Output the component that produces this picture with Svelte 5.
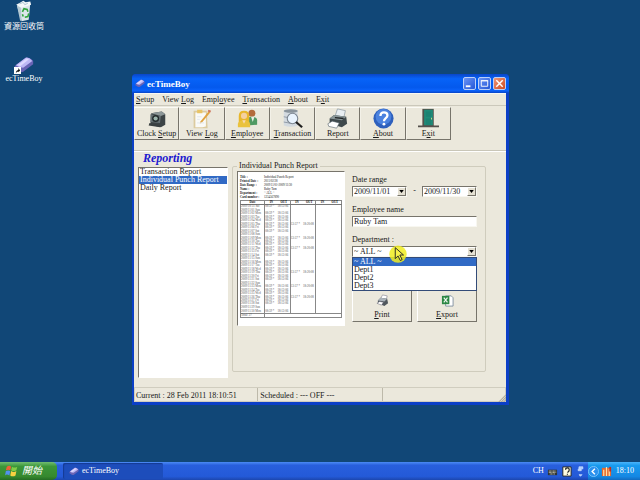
<script>
  const menus = [
    ['', 'S', 'etup'], ['View ', 'L', 'og'], ['Empl', 'o', 'yee'],
    ['', 'T', 'ransaction'], ['', 'A', 'bout'], ['E', 'x', 'it']
  ];
  const tools = [
    { id: 'clock', text: ['Clock ', 'S', 'etup'] },
    { id: 'log', text: ['View ', 'L', 'og'] },
    { id: 'people', text: ['', 'E', 'mployee'] },
    { id: 'search', text: ['', 'T', 'ransaction'] },
    { id: 'printer', text: ['Report', '', ''] },
    { id: 'help', text: ['', 'A', 'bout'] },
    { id: 'door', text: ['E', 'x', 'it'] }
  ];
  const reports = ['Transaction Report', 'Individual Punch Report', 'Daily Report'];
  const departments = ['~ ALL ~', 'Dept1', 'Dept2', 'Dept3'];
  let report = $state('Individual Punch Report');
  let department = $state('~ ALL ~');

  const info = [
    ['Title :', 'Individual Punch Report'],
    ['Printed Date :', '2011/02/28'],
    ['Date Range :', '2009/11/01-2009/11/30'],
    ['Name :', 'Ruby Tam'],
    ['Department :', '~ ALL ~'],
    ['Card number :', '1234567890']
  ];
  const days = ['Sat', 'Sun', 'Mon', 'Tue', 'Wed', 'Thu', 'Fri'];
  const twoShifts = [5, 9, 12, 19, 23, 26];
  const punches = Array.from({ length: 31 }, (_, i) => {
    const date = i === 0 ? '2009/10/31' : '2009/11/' + String(i).padStart(2, '0');
    const off = i % 7 === 1;
    const two = twoShifts.includes(i);
    return [date + ' ' + days[i % 7], off ? '' : '08:59 *', off ? '' : '18:12:06', two ? '13:57 *' : '', two ? '18:20:08' : '', '', ''];
  });
</script>

{#snippet key(t)}{t[0]}<u>{t[1]}</u>{t[2]}{/snippet}

{#snippet device()}
  <svg viewBox="0 0 24 20" aria-hidden="true">
    <path d="M1 12 14 2q3-1 7 2l2 2v4L11 19q-3 1-7-2l-3-2z" fill="#6964b5" />
    <path d="M2 11 14 2q4-1 8 4L11 14q-5 0-9-3z" fill="#bdb7f5" />
    <path d="M4 11 15 3l3 1L8 12z" fill="#ddd9ff" />
  </svg>
{/snippet}

{#snippet icon(id)}
  <svg class="icon" viewBox="0 0 24 24" aria-hidden="true">
    {#if id === 'clock'}
      <path d="M6 6 18 4l4 3v12l-5 3-12-3z" fill="#3d4446" /><path d="M6 6 18 4l4 3-5 2z" fill="#8c9697" />
      <path d="M5 7 17 9l-1 8-11-1z" fill="#677174" /><circle cx="11" cy="12" r="4" fill="#232b2c" /><circle cx="11" cy="12" r="2.4" fill="#9bb4ab" />
      <path d="m4 17 12 2v3L3 20z" fill="#3a4041" />
    {:else if id === 'log'}
      <path d="M3 3h15l1 20H3z" fill="#dccb9f" /><path d="M5 5h12v16l-4 1H5z" fill="#fafaf7" />
      <path d="M7 2h6v4H7z" fill="#e8c466" /><path d="m11 15 9-11 2 1-9 11-3 2z" fill="#e0a341" /><path d="m19 4 1-2 3 1-1 2z" fill="#cd765e" />
      <path d="M7 10h5M7 13h3M7 17h8" stroke="#dfe5ec" />
    {:else if id === 'people'}
      <circle cx="17" cy="6" r="4" fill="#b46b3c" /><path d="M12 20V13q0-3 5-3 6 0 6 4v5z" fill="#4f9a63" /><path d="m16 10 2 6 2-6z" fill="#e8eee4" />
      <path d="M2 17V9q0-6 6-6t6 6v8z" fill="#e8b72c" /><circle cx="8" cy="9" r="3.5" fill="#f4d0a0" />
      <path d="M1 22v-4q1-4 7-4t7 4v4z" fill="#eac23c" /><path d="m6 14 2 4 2-4z" fill="#f7d9b4" />
    {:else if id === 'search'}
      <path d="M2 3q8-4 16 0v17q-8 3-16 0z" fill="#d3dae0" /><ellipse cx="10" cy="3.500" rx="8" ry="2" fill="#8b959d" />
      <path d="M2 10q8 3 16 0M2 16q8 3 16 0" fill="none" stroke="#8993a0" />
      <circle cx="12" cy="12" r="6" fill="#e9f4ff" stroke="#7d8792" stroke-width="1.3" /><path d="m16 16 7 6" stroke="#202020" stroke-width="2.6" />
    {:else if id === 'printer'}
      <path d="m9 10 3-9 9 2-2 9z" fill="#e8eef2" stroke="#7b8b95" stroke-width=".7" />
      <path d="m3 12 5-4 14 2 1 8-6 4L3 18z" fill="#3f494c" /><path d="m3 12 5-4 14 2-5 4z" fill="#8a9799" />
      <path d="m1 18 5-3 8 2-3 6-9-2z" fill="#fff" stroke="#56636a" stroke-width=".7" /><path d="m9 11 10 1" stroke="#202527" stroke-width="1.5" />
    {:else if id === 'help'}
      <circle cx="12" cy="12" r="11.5" fill="#2e60bd" /><circle cx="12" cy="10" r="9" fill="#4b82df" />
      <path d="M8.5 9q0-4 4-4t4 3.5c0 3-4 3-4 6.5" fill="none" stroke="#fff" stroke-width="2.6" /><circle cx="12.5" cy="18.5" r="1.6" fill="#fff" />
    {:else if id === 'door'}
      <path d="M5 1h13v20H5z" fill="#54514a" /><path d="M7 2h10v18H7z" fill="#1f8b78" /><path d="M9 4h6v6H9zM9 12h6v7H9z" fill="#1b8272" />
      <path d="M0 20h24v2H0z" fill="#55514c" /><path d="M15 11h1v2h-1z" fill="#e5d98a" />
    {/if}
  </svg>
{/snippet}

{#snippet arrow()}<svg viewBox="0 0 6 4" aria-hidden="true"><path d="M0 0h6L3 4z" /></svg>{/snippet}

<div class="desktop">
  <nav class="shortcuts" aria-label="Desktop">
    <a href="#recycle">
      <svg viewBox="2 0 24 28" aria-hidden="true">
        <path d="m5 7 17-3-2 21-9 2z" fill="#dce6ea" /><path d="m5 7 5 3 1 17-2-1z" fill="#b4c8d2" />
        <path d="m4 6 6-3 3-2 3 2 6-1 1 4-12 4z" fill="#f5f9fa" /><path d="m8 5 5-2 2 3 4-2" fill="none" stroke="#9fb9c8" />
        <path d="m12 15 2-4 4 1 1 3m1 2-1 4-4 1m-2-1-1-3" fill="none" stroke="#2fa53b" stroke-width="2" />
      </svg>
      <span>資源回收筒</span>
    </a>
    <a href="#timeboy">
      <span class="device">{@render device()}
        <svg class="badge" viewBox="0 0 8 8" aria-hidden="true"><path d="M0 0h8v8H0z" fill="#fff" /><path d="M2 7q0-3 3-4V1l2 3-2 2V5Q3 5 2 7z" fill="#111" /></svg>
      </span>
      <span>ecTimeBoy</span>
    </a>
  </nav>

  <main class="window">
    <header class="title">
      <span class="mark">{@render device()}</span><h1>ecTimeBoy</h1>
      <button aria-label="Minimize"><svg viewBox="0 0 12 12"><path d="M2 9h5" stroke-width="2" /></svg></button>
      <button aria-label="Maximize"><svg viewBox="0 0 12 12"><path d="M2.500 3h7v6h-7zM2 3h8" /></svg></button>
      <button class="close" aria-label="Close"><svg viewBox="0 0 12 12"><path d="m2.500 2.500 7 7m0-7-7 7" stroke-width="1.600" /></svg></button>
    </header>
    <div class="body">
      <nav class="menu" aria-label="Menu">
        {#each menus as m}<button>{@render key(m)}</button>{/each}
      </nav>
      <div class="toolbar" role="toolbar" aria-label="Tools">
        {#each tools as t}<button>{@render icon(t.id)}<span>{@render key(t.text)}</span></button>{/each}
      </div>
      <div class="content">
        <section class="side">
          <h2>Reporting</h2>
          <ul class="reports" role="listbox" aria-label="Reporting">
            {#each reports as r}
              <li role="option" aria-selected={r === report}><button onclick={() => (report = r)}>{r}</button></li>
            {/each}
          </ul>
        </section>
        <fieldset>
          <legend>Individual Punch Report</legend>
          <div class="panel">
            <div class="preview">
              <dl>{#each info as [k, v]}<div><dt>{k}</dt><dd>{v}</dd></div>{/each}</dl>
              <table>
                <thead><tr><th>Date</th><th>IN</th><th>OUT</th><th>IN</th><th>OUT</th><th>IN</th><th>OUT</th></tr></thead>
                <tbody>{#each punches as row}<tr>{#each row as cell}<td>{cell}</td>{/each}</tr>{/each}</tbody>
                <tfoot><tr><td>Total: 27</td><td colspan="6"></td></tr></tfoot>
              </table>
            </div>
            <form onsubmit={(e) => e.preventDefault()}>
              <label for="from">Date range</label>
              <div class="dates">
                <div class="field"><input id="from" value="2009/11/01" /><button type="button" aria-label="Pick start date">{@render arrow()}</button></div>
                <span>-</span>
                <div class="field"><input aria-label="End date" value="2009/11/30" /><button type="button" aria-label="Pick end date">{@render arrow()}</button></div>
              </div>
              <label for="employee">Employee name</label>
              <div class="field"><input id="employee" value="Ruby Tam" /></div>
              <label for="department">Department :</label>
              <div class="combo">
                <div class="field">
                  <select id="department" bind:value={department}>{#each departments as d}<option>{d}</option>{/each}</select>
                  <span class="drop">{@render arrow()}</span>
                </div>
                <ul class="options" role="listbox" aria-label="Departments">
                  {#each departments as d}<li role="option" aria-selected={d === department}>{d}</li>{/each}
                </ul>
                <svg class="pointer" viewBox="0 0 24 24" aria-hidden="true">
                  <circle cx="12" cy="11" r="9.500" fill="#f0ec20" opacity=".85" />
                  <path d="M9 4v12l3-3 2.500 5 2-1-2.500-5h4z" fill="#f6f04a" stroke="#222" stroke-width="1" />
                </svg>
              </div>
              <div class="actions">
                <button type="button">
                  <svg viewBox="0 0 14 14" aria-hidden="true"><path d="m5 5 2-4 5 1-1 5z" fill="#fff" stroke="#778" stroke-width=".6" /><path d="m2 7 3-3 7 1 1 5-4 3-7-3z" fill="#50585e" /><path d="m2 7 3-3 7 1-3 3z" fill="#aab3ba" /><path d="m1 10 3-2 4 1-2 3z" fill="#fff" stroke="#556" stroke-width=".5" /></svg>
                  <span><u>P</u>rint</span>
                </button>
                <button type="button">
                  <svg viewBox="0 0 14 14" aria-hidden="true"><path d="M5 2h6l2 2v9H5z" fill="#fff" stroke="#687b91" stroke-width=".8" /><path d="M1 2h8v9H1z" fill="#2c8744" /><path d="m3 4 4 5m0-5L3 9" stroke="#eef8ef" stroke-width="1.300" /></svg>
                  <span><u>E</u>xport</span>
                </button>
              </div>
            </form>
          </div>
        </fieldset>
      </div>
      <footer class="status"><span>Current : 28 Feb 2011 18:10:51</span><span>Scheduled : --- OFF ---</span><span></span>
        <svg viewBox="0 0 10 10" aria-hidden="true"><path d="m1 10 9-9M4 10l6-6M7 10l3-3" stroke="#aaa798" stroke-width="1.300" /></svg>
      </footer>
    </div>
  </main>

  <footer class="taskbar">
    <button class="start">
      <svg viewBox="0 0 16 16" aria-hidden="true"><path d="M2 3q3-2 5 0L6 7Q4 6 1 7z" fill="#ed6039" /><path d="M8 3q3 2 6 0l-1 4q-3 2-6 0z" fill="#83cd46" /><path d="M1 8q3-1 5 0l-1 5q-3-2-5 0z" fill="#5291f0" /><path d="M7 8q3 2 6 0l-1 5q-3 2-6 0z" fill="#f8d140" /></svg>
      <span>開始</span>
    </button>
    <button class="task"><span class="mark">{@render device()}</span>ecTimeBoy</button>
    <div class="lang">
      <span>CH</span>
      <svg viewBox="0 0 12 12" aria-hidden="true"><path d="M1 4h10v6H1z" fill="#2e3436" /><path d="M2 5.500h8M2 7h8M3 8.700h6" stroke="#d8d5bd" stroke-dasharray="1 .5" /></svg>
      <svg viewBox="0 0 12 12" aria-hidden="true"><path d="M2 1h9v10H2z" fill="#fffce0" stroke="#222" /><path d="M5 4q0-2 2-2t2 2-2 3m0 1.500v1" fill="none" stroke="#222" stroke-width="1.300" /></svg>
      <svg viewBox="0 0 12 14" aria-hidden="true"><path d="M4 4V1h5v3M3 4h4v2H3zM4 11h4l-2 2z" fill="#a9caff" stroke="#d9e8ff" stroke-width=".8" /></svg>
    </div>
    <div class="tray">
      <svg viewBox="0 0 12 12" aria-hidden="true"><circle cx="6" cy="6" r="5.500" fill="#2b91ee" stroke="#8fd0ff" stroke-width=".8" /><path d="M7.500 3 4.500 6l3 3" fill="none" stroke="#fff" stroke-width="1.500" /></svg>
      <svg viewBox="0 0 12 12" aria-hidden="true"><path d="M1 2h10v9H1z" fill="#e66a2e" /><path d="M3 4v7M6 1v10M9 3v8" stroke="#ffe1a8" stroke-width="1.300" /><path d="M10 1v5" stroke="#c52a1b" stroke-width="2" /></svg>
      <time>18:10</time>
    </div>
  </footer>
</div>

<style>
  :global(body) { margin: 0; }
  .desktop { position: relative; display: flex; flex-direction: column; min-height: 100vh; overflow: hidden; background: #114777; color: #181818; font: 8px/10px "Liberation Serif", "Noto Sans CJK TC", serif; }
  .desktop * { box-sizing: border-box; }
  button, input, select { font: inherit; color: inherit; margin: 0; padding: 0; border: 0; border-radius: 0; background: none; }
  svg { display: block; flex: none; }
  ul, dl, dd, h1, h2 { margin: 0; padding: 0; list-style: none; }
  .shortcuts { flex: 1; display: flex; flex-direction: column; align-items: flex-start; gap: 24px; }
  .shortcuts a { width: 48px; display: flex; flex-direction: column; align-items: center; color: #fff; text-decoration: none; white-space: nowrap; }
  .shortcuts a > svg { width: 22px; height: 22px; }
  .shortcuts a > span:last-child { line-height: 10px; }
  .device { position: relative; width: 20px; height: 18px; }
  .device .badge { position: absolute; left: 0; bottom: 0; width: 7px; height: 7px; }

  .window { position: absolute; left: 132px; top: 74px; width: 377px; padding: 0 3px 3px 2px; background: #0b3fc6; border-radius: 4px 4px 0 0; }
  .title { display: flex; align-items: center; gap: 2px; height: 19px; margin: 0 -3px 0 -2px; padding: 0 3px; color: #fff; border-radius: 4px 4px 0 0; background: linear-gradient(#0a46c8, #0763f8 25%, #0459ed 70%, #0b62fb 88%, #0843c4); }
  .title h1 { flex: 1; font-size: 9px; line-height: 12px; }
  .mark { width: 10px; }
  .title button { width: 13px; height: 13px; border: 1px solid #bcd0f8; border-radius: 2px; background: linear-gradient(135deg, #6b94f5, #2357d8); }
  .title button.close { background: linear-gradient(135deg, #ee9678, #cf4b20); }
  .title button path { fill: none; stroke: #fff; }
  .body { background: #ebe8dc; border-top: 1px solid #f8f7f2; }
  .menu { display: flex; gap: 8px; height: 12px; padding-left: 2px; border-bottom: 1px solid #cbc8bb; }
  .toolbar { display: flex; padding: 1px 55px 10px 0; border-bottom: 1px solid #c9c6b8; }
  .toolbar button { flex: 1; display: flex; flex-direction: column; align-items: center; justify-content: space-between; height: 33px; white-space: nowrap; border: 1px solid; border-color: #fbfaf5 #77746b #77746b #f3f1e8; }
  .icon { width: 21px; height: 21px; }
  .content { display: flex; gap: 4px; padding: 0 20px 9px 4px; height: 236px; border-top: 1px solid #fff; }
  .side { width: 90px; display: flex; flex-direction: column; }
  h2 { padding-left: 5px; color: #2018cf; font-size: 12px; line-height: 12px; height: 15px; font-style: italic; }
  .reports { flex: 1; background: #fff; border: 1px solid; border-color: #77746b #fff #fff #77746b; }
  .reports li { display: flex; height: 8px; }
  .reports button { flex: 1; padding-left: 1px; text-align: left; line-height: 8px; white-space: nowrap; }
  li[aria-selected='true'] { background: #316ac5; color: #fff; }
  fieldset { flex: 1; min-width: 0; margin: 9px 0 6px; padding: 0 8px 0 4px; border: 1px solid #cfccbd; border-radius: 2px; }
  legend { padding: 0 2px; }
  .panel { display: flex; gap: 7px; }
  .preview { flex: none; width: 108px; height: 155px; padding: 3px 2px 0; overflow: hidden; background: #fff; border: 1px solid; border-color: #77746b #fff #fff #77746b; }
  dl { height: 25px; font-size: 3px; line-height: 4px; }
  dl div { display: flex; }
  dt { width: 24px; font-weight: bold; }
  table { width: 100%; height: 118px; table-layout: fixed; border-collapse: collapse; font-size: 3px; line-height: 3px; color: #555; border: 1px solid #888; }
  th, td { padding: 0; white-space: nowrap; text-align: left; }
  th { color: #111; text-align: center; border-bottom: 1px solid #777; }
  th:first-child { width: 24%; }
  th:nth-child(2n + 1), td:nth-child(2n + 1) { border-right: 1px solid #888; }
  tfoot td { height: 4px; border-top: 1px solid #888; }
  form { flex: 1; min-width: 0; display: flex; flex-direction: column; padding-top: 4px; }
  form label { margin-bottom: 1px; }
  .field { display: flex; height: 11px; margin-bottom: 8px; background: #fff; border: 1px solid; border-color: #77746b #f8f7f0 #f8f7f0 #77746b; }
  .field input, .field select { flex: 1; min-width: 0; padding-left: 1px; outline: 0; appearance: none; line-height: 9px; }
  .field button, .drop { display: grid; place-items: center; width: 9px; background: #e5e1d3; border: 1px solid; border-color: #fff #77746b #77746b #fff; }
  .field button svg, .drop svg { width: 5px; height: 3px; }
  .dates { display: flex; justify-content: space-between; }
  .dates .field { width: 55px; }
  .combo { position: relative; }
  .drop { position: absolute; right: 1px; top: 1px; height: 9px; pointer-events: none; }
  .options { position: absolute; z-index: 1; left: 0; right: 0; top: 11px; background: #fff; border: 1px solid #334b78; }
  .options li { height: 8px; padding-left: 1px; line-height: 8px; }
  .pointer { position: absolute; z-index: 2; left: 35px; top: -2px; width: 22px; height: 22px; }
  .actions { display: flex; gap: 5px; margin-top: 25px; }
  .actions button { flex: 1; display: flex; flex-direction: column; align-items: center; justify-content: space-between; height: 32px; padding: 3px 0 1px; border: 1px solid; border-color: #fff #77746b #77746b #fff; }
  .actions svg { width: 13px; height: 13px; }
  .status { position: relative; display: flex; height: 15px; border-top: 1px solid #fff; outline: 1px solid #d0cdbf; outline-offset: -1px; }
  .status span { flex: 1; padding: 3px 2px 1px; white-space: nowrap; border-right: 1px solid #bdb9aa; }
  .status span:last-of-type { border: 0; }
  .status svg { position: absolute; right: 0; bottom: 0; width: 8px; height: 8px; }

  .taskbar { display: flex; height: 18px; color: #fff; background: linear-gradient(#4b8bf5, #285fdd 18%, #245ad8 80%, #1c46ae); }
  .start { display: flex; align-items: center; gap: 3px; width: 57px; padding-left: 5px; border-radius: 0 5px 5px 0; background: linear-gradient(#71bd70, #3b9639 25%, #36892f 80%, #246c24); font-size: 10px; font-style: italic; }
  .start svg { width: 14px; height: 14px; }
  .task { display: flex; align-items: center; gap: 3px; width: 100px; margin: 1px 0 1px 6px; padding-left: 6px; border-radius: 2px; background: #1d4dbb; box-shadow: inset 1px 1px 1px #163b94; }
  .lang { display: flex; align-items: center; gap: 3px; margin-left: auto; padding-right: 2px; }
  .lang svg, .tray svg { width: 11px; height: 11px; }
  .tray { display: flex; align-items: center; gap: 2px; padding-right: 6px; background: linear-gradient(#4ab4fa, #189aee 20%, #1588e4 80%, #126bc0); }
  .tray time { margin-left: 2px; }
</style>
